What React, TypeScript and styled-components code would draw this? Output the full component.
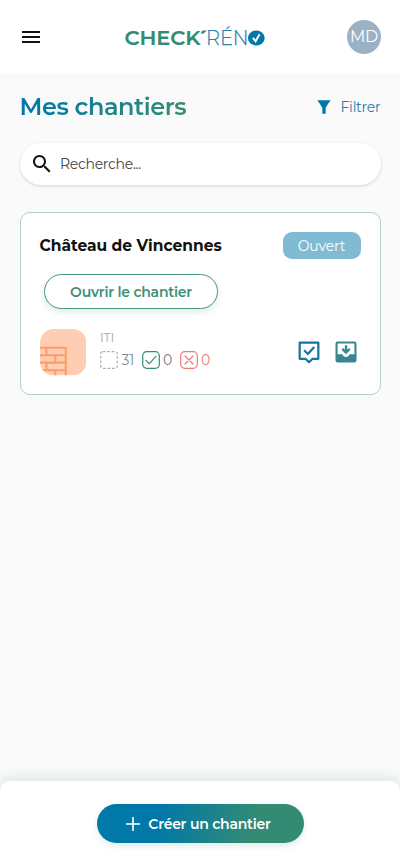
import React from "react";
import styled, { createGlobalStyle } from "styled-components";

const Global = createGlobalStyle`
  * { box-sizing: border-box; }
  body { margin: 0; background: #fafafa; }
  button, input { font: inherit; letter-spacing: inherit; }
`;

const Page = styled.div`
  height: 866px;
  display: flex;
  flex-direction: column;
  background: #fafafa;
  color: #111;
  font-family: Montserrat, Inter, sans-serif;
  overflow: hidden;
`;

const Header = styled.header`
  height: 73px;
  flex: none;
  display: flex;
  align-items: center;
  justify-content: space-between;
  padding: 0 19px;
  background: #fff;
`;

const MenuButton = styled.button`
  display: flex;
  padding: 0;
  border: 0;
  background: none;
  margin-right: 2px;
`;

const Avatar = styled.div`
  width: 34px;
  height: 34px;
  border-radius: 50%;
  display: grid;
  place-items: center;
  background: #9ab1c6;
  color: #fff;
  font-size: 16px;
  letter-spacing: -0.2px;
`;

const Main = styled.main`
  flex: 1;
  padding: 18px 19.5px 0;
`;

const TitleRow = styled.div`
  display: flex;
  align-items: center;
  justify-content: space-between;
  height: 32px;
`;

const Title = styled.h1`
  margin: 0;
  font-size: 24px;
  line-height: 32px;
  font-weight: 600;
  letter-spacing: -0.45px;
  background: linear-gradient(115deg, #0078a8 10%, #348b74 90%);
  background-clip: text;
  -webkit-background-clip: text;
  color: transparent;
`;

const FilterButton = styled.button`
  display: flex;
  align-items: center;
  gap: 6.5px;
  padding: 0;
  border: 0;
  background: none;
  color: #2a7ba8;
  font-size: 14px;
  letter-spacing: -0.2px;
`;

const Search = styled.label`
  display: flex;
  align-items: center;
  gap: 6.5px;
  height: 42px;
  margin-top: 20px;
  padding: 0 10px;
  border-radius: 21px;
  background: #fff;
  box-shadow: 0 1px 3px rgba(0, 0, 0, 0.16);
`;

const SearchInput = styled.input`
  flex: 1;
  min-width: 0;
  padding: 0;
  border: 0;
  outline: 0;
  background: none;
  font-size: 14px;
  letter-spacing: -0.28px;
  &::placeholder { color: #444; opacity: 1; }
`;

const Card = styled.article`
  height: 183px;
  margin-top: 27px;
  padding: 19px 19px 0;
  border: 1px solid #b4ced3;
  border-radius: 10px;
  background: #fff;
`;

const CardHead = styled.div`
  display: flex;
  align-items: center;
  justify-content: space-between;
`;

const CardTitle = styled.h2`
  margin: 0;
  font-size: 15.5px;
  font-weight: 700;
`;

const Status = styled.span`
  width: 78px;
  height: 27px;
  display: grid;
  place-items: center;
  border-radius: 9px;
  background: #80bad3;
  color: #fff;
  font-size: 14px;
  letter-spacing: -0.15px;
`;

const OpenButton = styled.button`
  display: block;
  width: 174px;
  height: 35px;
  margin: 15px 0 0 4.5px;
  padding: 0;
  border: 1px solid #46957f;
  border-radius: 18px;
  background: #fff;
  color: #3f8f78;
  font-size: 14px;
  letter-spacing: -0.23px;
  font-weight: 600;
  box-shadow: 0 3px 6px rgba(52, 139, 116, 0.16);
`;

const CardFoot = styled.div`
  display: flex;
  align-items: center;
  margin-top: 20px;
`;

const Lot = styled.div`
  margin-left: 14px;
  margin-top: -3px;
`;

const LotName = styled.div`
  height: 19px;
  color: #aaa;
  font-size: 12.5px;
  letter-spacing: -0.2px;
  line-height: 18px;
`;

const Counters = styled.div`
  display: flex;
  align-items: center;
  height: 24px;
`;

const Counter = styled.span<{ $color: string; $width: number }>`
  display: flex;
  align-items: center;
  gap: 3.5px;
  width: ${(p) => p.$width}px;
  color: ${(p) => p.$color};
  font-size: 14px;
  letter-spacing: -0.2px;
  line-height: 24px;
`;

const Actions = styled.div`
  display: flex;
  gap: 9px;
  margin: 0 1px 0 auto;
`;

const Footer = styled.footer`
  flex: none;
  height: 85px;
  display: flex;
  justify-content: center;
  padding-top: 23px;
  border-radius: 10px 10px 0 0;
  background: #fff;
  box-shadow: 0 -3px 14px rgba(52, 139, 116, 0.17);
`;

const CreateButton = styled.button`
  display: flex;
  align-items: center;
  justify-content: center;
  gap: 8px;
  width: 207px;
  height: 39px;
  padding: 0 3px 0 0;
  border: 0;
  border-radius: 20px;
  background: linear-gradient(105deg, #0078a8 30%, #348b74 75%);
  color: #fff;
  font-size: 14px;
  letter-spacing: -0.23px;
  font-weight: 600;
  box-shadow: 0 3px 6px rgba(52, 139, 116, 0.16);
`;

const Icon = ({ d, size = 24, color }: { d: string; size?: number; color: string }) => (
  <svg width={size} height={size} viewBox="0 0 24 24" fill={color}>
    <path d={d} />
  </svg>
);

const Logo = () => (
  <svg width="142" height="28" viewBox="0 0 142 28" fontFamily="Montserrat, Inter, sans-serif">
    <text x="-0.5" y="22.2" fontSize="20.5" fontWeight="600" fill="#348b74" stroke="#348b74" strokeWidth="0.2" textLength="76" lengthAdjust="spacingAndGlyphs">CHECK</text>
    <path d="M75.5 10.5l2-3h4.5l-3.5 3z" fill="#348b74" />
    <text x="81" y="22.2" fontSize="20.5" fontWeight="300" fill="#2a7fa8" stroke="#2a7fa8" strokeWidth="0.25" textLength="42.5" lengthAdjust="spacingAndGlyphs">RÉN</text>
    <ellipse cx="131.3" cy="15" rx="8.4" ry="7.5" fill="#0078a8" />
    <path d="M128 15l2.6 3.2 4-7" fill="none" stroke="#fff" strokeWidth="2" />
  </svg>
);

const Wall = () => (
  <svg width="46.5" height="46.5" viewBox="0 0 47 47">
    <defs>
      <clipPath id="tile"><rect width="47" height="47" rx="14" /></clipPath>
    </defs>
    <g clipPath="url(#tile)">
      <rect width="47" height="47" fill="#ffceb2" />
      <path
        d="M0 19H26V47M0 26.6H26M0 34H26M0 41.7H26M6.5 19V26.6M15.5 26.6V34M6.5 34V41.5M15.5 41.5V47"
        fill="none" stroke="#fb9c69" strokeWidth="2.1"
      />
    </g>
  </svg>
);

const Box = ({ color, mark, dashed }: { color: string; mark?: string; dashed?: boolean }) => (
  <svg width="18" height="18" viewBox="0 0 18 18" fill="none" stroke={color} strokeWidth="1.2">
    <rect x="0.7" y="0.7" width="16.6" height="16.6" rx={dashed ? 2 : 4} strokeDasharray={dashed ? "2.6 1.9" : undefined} />
    {mark && <path d={mark} strokeLinecap="round" />}
  </svg>
);

const CommentCheck = () => (
  <svg width="28" height="28" viewBox="0 0 24 24" fill="none" stroke="#1576a2" strokeWidth="1.9" strokeLinejoin="round">
    <path d="M4 3.9h16v13.9h-5L12 20.8 9 17.8H4z" />
    <path d="M7.8 10.5l3.2 3.2 5.5-6" />
  </svg>
);

const InboxDown = () => (
  <svg width="28" height="28" viewBox="0 0 24 24" fill="#38868f">
    <path fillRule="evenodd" d="M5 3h14a2 2 0 0 1 2 2v14a2 2 0 0 1-2 2H5a2 2 0 0 1-2-2V5a2 2 0 0 1 2-2zM4.8 4.8V14H9c.4 1.5 1.5 2.3 3 2.3s2.6-.8 3-2.3h4.2V4.8z" />
    <path d="M12 6.3V12M8.8 9.3l3.2 3.2 3.2-3.2" fill="none" stroke="#38868f" strokeWidth="2" />
  </svg>
);

export default function App() {
  return (
    <Page>
      <Global />
      <Header>
        <MenuButton aria-label="Menu">
          <Icon color="#111" d="M3 18h18v-2H3v2zm0-5h18v-2H3v2zm0-7v2h18V6H3z" />
        </MenuButton>
        <Logo />
        <Avatar>MD</Avatar>
      </Header>
      <Main>
        <TitleRow>
          <Title>Mes chantiers</Title>
          <FilterButton>
            <Icon size={20} color="#0078a8" d="M4 4C6.02 6.59 10 13 10 13v6.5c0 .3.2.5.5.5h3c.3 0 .5-.2.5-.5V13s4-6.41 6-9z" />
            Filtrer
          </FilterButton>
        </TitleRow>
        <Search>
          <Icon color="#111" d="M15.5 14h-.79l-.28-.27C15.41 12.59 16 11.11 16 9.5 16 5.91 13.09 3 9.5 3S3 5.91 3 9.5 5.91 16 9.5 16c1.61 0 3.09-.59 4.23-1.57l.27.28v.79l5 4.99L20.49 19l-4.99-5zm-6 0C7.01 14 5 11.99 5 9.5S7.01 5 9.5 5 14 7.01 14 9.5 11.99 14 9.5 14z" />
          <SearchInput placeholder="Recherche..." />
        </Search>
        <Card>
          <CardHead>
            <CardTitle>Château de Vincennes</CardTitle>
            <Status>Ouvert</Status>
          </CardHead>
          <OpenButton>Ouvrir le chantier</OpenButton>
          <CardFoot>
            <Wall />
            <Lot>
              <LotName>ITI</LotName>
              <Counters>
                <Counter $color="#888" $width={41.5}><Box color="#aaa" dashed />31</Counter>
                <Counter $color="#777" $width={38}><Box color="#348b74" mark="M4 9.3l3.3 3.3 6.7-7.3" />0</Counter>
                <Counter $color="#ee7b7b" $width={32}><Box color="#ee7b7b" mark="M5 5l8 8M13 5l-8 8" />0</Counter>
              </Counters>
            </Lot>
            <Actions>
              <CommentCheck />
              <InboxDown />
            </Actions>
          </CardFoot>
        </Card>
      </Main>
      <Footer>
        <CreateButton>
          <svg width="14" height="14" viewBox="0 0 14 14" stroke="#fff" strokeWidth="1.6"><path d="M7 0v14M0 7h14" /></svg>
          Créer un chantier
        </CreateButton>
      </Footer>
    </Page>
  );
}
